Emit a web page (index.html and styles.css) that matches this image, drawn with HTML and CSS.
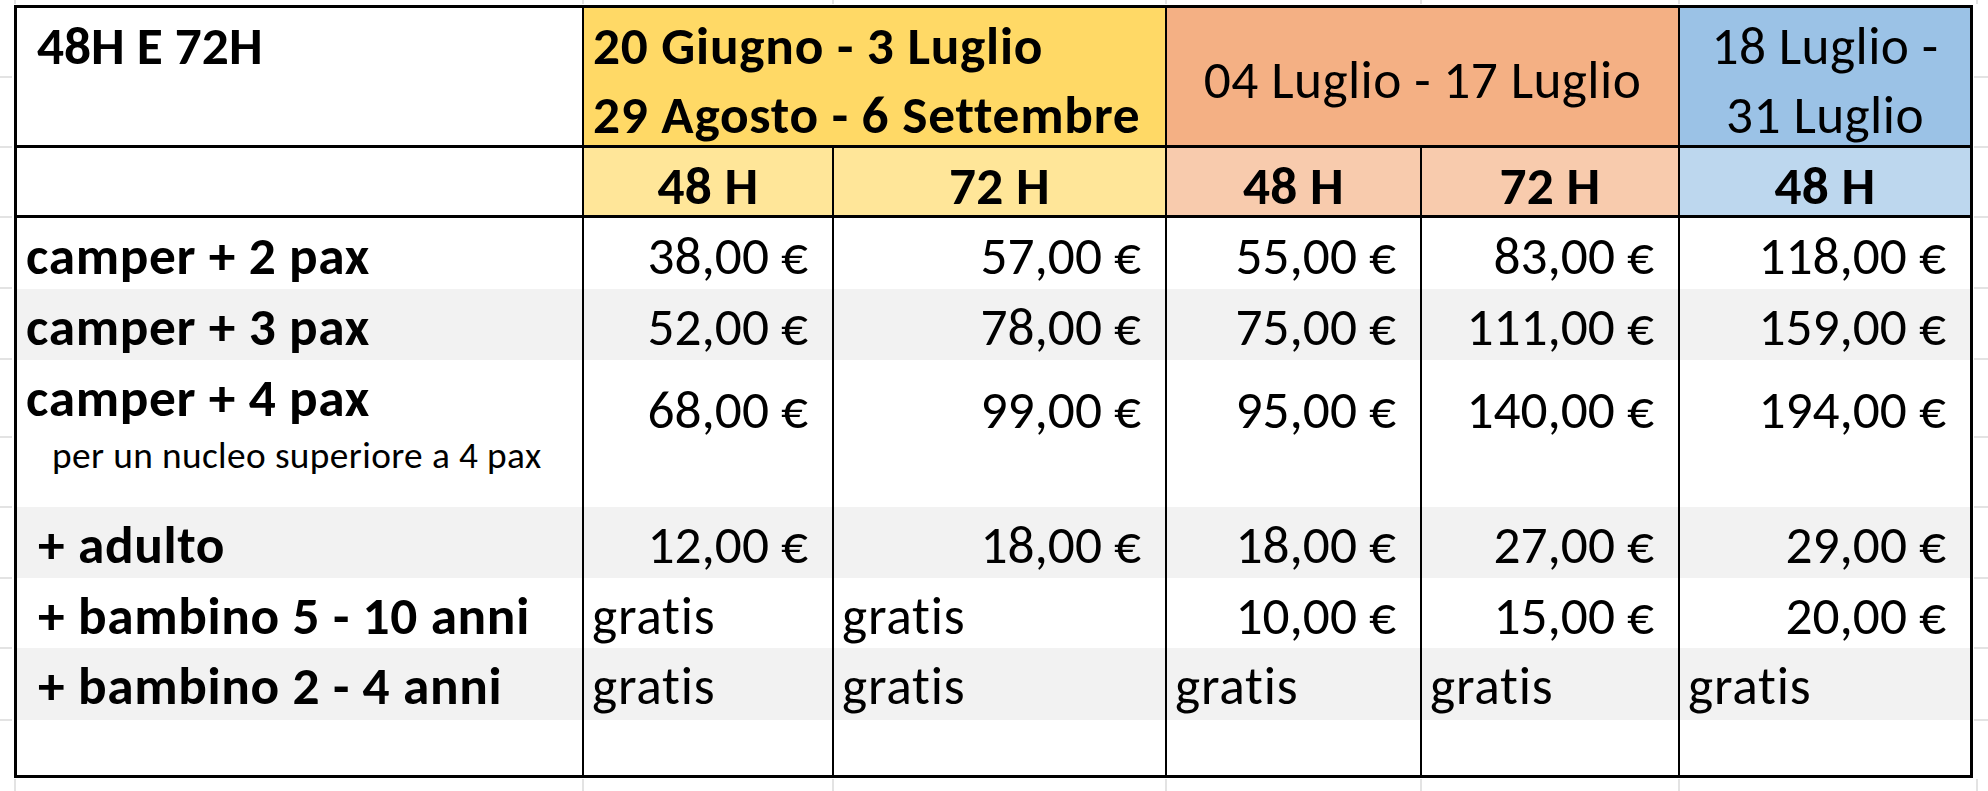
FILE: index.html
```html
<!DOCTYPE html>
<html lang="it">
<head>
<meta charset="utf-8">
<title>Tariffe camper 48H e 72H</title>
<link rel="stylesheet" href="styles.css">
</head>
<body>
<div class="sheet">
  <div class="rates">
    <div class="cell h1 title">48H E 72H</div>
    <div class="cell h1 yellow bold span2 left">20 Giugno - 3 Luglio<br>29 Agosto - 6 Settembre</div>
    <div class="cell h1 orange span2 center mid">04 Luglio - 17 Luglio</div>
    <div class="cell h1 blue center">18 Luglio -<br>31 Luglio</div>

    <div class="cell h2 first"></div>
    <div class="cell h2 yellow-l sub center">48 H</div>
    <div class="cell h2 yellow-l sub center">72 H</div>
    <div class="cell h2 orange-l sub center">48 H</div>
    <div class="cell h2 orange-l sub center">72 H</div>
    <div class="cell h2 blue-l sub center">48 H</div>

    <div class="cell first label">camper + 2 pax</div>
    <div class="cell num">38,00 €</div>
    <div class="cell num">57,00 €</div>
    <div class="cell num">55,00 €</div>
    <div class="cell num">83,00 €</div>
    <div class="cell num">118,00 €</div>

    <div class="cell first label band">camper + 3 pax</div>
    <div class="cell num band">52,00 €</div>
    <div class="cell num band">78,00 €</div>
    <div class="cell num band">75,00 €</div>
    <div class="cell num band">111,00 €</div>
    <div class="cell num band">159,00 €</div>

    <div class="cell first label tall">camper + 4 pax<div class="note">per un nucleo superiore a 4 pax</div></div>
    <div class="cell num low">68,00 €</div>
    <div class="cell num low">99,00 €</div>
    <div class="cell num low">95,00 €</div>
    <div class="cell num low">140,00 €</div>
    <div class="cell num low">194,00 €</div>

    <div class="cell first label indent band">+ adulto</div>
    <div class="cell num band">12,00 €</div>
    <div class="cell num band">18,00 €</div>
    <div class="cell num band">18,00 €</div>
    <div class="cell num band">27,00 €</div>
    <div class="cell num band">29,00 €</div>

    <div class="cell first label indent">+ bambino 5 - 10 anni</div>
    <div class="cell free">gratis</div>
    <div class="cell free">gratis</div>
    <div class="cell num">10,00 €</div>
    <div class="cell num">15,00 €</div>
    <div class="cell num">20,00 €</div>

    <div class="cell first label indent band">+ bambino 2 - 4 anni</div>
    <div class="cell free band">gratis</div>
    <div class="cell free band">gratis</div>
    <div class="cell free band">gratis</div>
    <div class="cell free band">gratis</div>
    <div class="cell free band">gratis</div>

    <div class="cell first"></div>
    <div class="cell"></div>
    <div class="cell"></div>
    <div class="cell"></div>
    <div class="cell"></div>
    <div class="cell"></div>
  </div>
</div>
</body>
</html>
```

FILE: styles.css
```css
* { box-sizing: border-box; }

html, body {
  margin: 0;
}

body {
  font-family: "Carlito", "Lato", "Liberation Sans", sans-serif;
  font-variant-ligatures: none;
  color: #000000;
  min-height: 791px;
  background-color: #ffffff;
  /* faint spreadsheet gridlines visible around the table */
  background-image:
    linear-gradient(to bottom,
      transparent 76px, #e3e3e3 76px, #e3e3e3 78px, transparent 78px,
      transparent 146px, #e3e3e3 146px, #e3e3e3 148px, transparent 148px,
      transparent 216px, #e3e3e3 216px, #e3e3e3 218px, transparent 218px,
      transparent 287px, #e3e3e3 287px, #e3e3e3 289px, transparent 289px,
      transparent 358px, #e3e3e3 358px, #e3e3e3 360px, transparent 360px,
      transparent 436px, #e3e3e3 436px, #e3e3e3 438px, transparent 438px,
      transparent 506px, #e3e3e3 506px, #e3e3e3 508px, transparent 508px,
      transparent 577px, #e3e3e3 577px, #e3e3e3 579px, transparent 579px,
      transparent 647px, #e3e3e3 647px, #e3e3e3 649px, transparent 649px,
      transparent 719px, #e3e3e3 719px, #e3e3e3 721px, transparent 721px),
    linear-gradient(to bottom,
      transparent 76px, #e3e3e3 76px, #e3e3e3 78px, transparent 78px,
      transparent 146px, #e3e3e3 146px, #e3e3e3 148px, transparent 148px,
      transparent 216px, #e3e3e3 216px, #e3e3e3 218px, transparent 218px,
      transparent 287px, #e3e3e3 287px, #e3e3e3 289px, transparent 289px,
      transparent 358px, #e3e3e3 358px, #e3e3e3 360px, transparent 360px,
      transparent 436px, #e3e3e3 436px, #e3e3e3 438px, transparent 438px,
      transparent 506px, #e3e3e3 506px, #e3e3e3 508px, transparent 508px,
      transparent 577px, #e3e3e3 577px, #e3e3e3 579px, transparent 579px,
      transparent 647px, #e3e3e3 647px, #e3e3e3 649px, transparent 649px,
      transparent 719px, #e3e3e3 719px, #e3e3e3 721px, transparent 721px),
    linear-gradient(to right,
      transparent 14px, #e3e3e3 14px, #e3e3e3 16px, transparent 16px,
      transparent 582px, #e3e3e3 582px, #e3e3e3 584px, transparent 584px,
      transparent 832px, #e3e3e3 832px, #e3e3e3 834px, transparent 834px,
      transparent 1165px, #e3e3e3 1165px, #e3e3e3 1167px, transparent 1167px,
      transparent 1420px, #e3e3e3 1420px, #e3e3e3 1422px, transparent 1422px,
      transparent 1678px, #e3e3e3 1678px, #e3e3e3 1680px, transparent 1680px,
      transparent 1976px, #e3e3e3 1976px, #e3e3e3 1978px, transparent 1978px),
    linear-gradient(to right,
      transparent 14px, #e3e3e3 14px, #e3e3e3 16px, transparent 16px,
      transparent 582px, #e3e3e3 582px, #e3e3e3 584px, transparent 584px,
      transparent 832px, #e3e3e3 832px, #e3e3e3 834px, transparent 834px,
      transparent 1165px, #e3e3e3 1165px, #e3e3e3 1167px, transparent 1167px,
      transparent 1420px, #e3e3e3 1420px, #e3e3e3 1422px, transparent 1422px,
      transparent 1678px, #e3e3e3 1678px, #e3e3e3 1680px, transparent 1680px,
      transparent 1976px, #e3e3e3 1976px, #e3e3e3 1978px, transparent 1978px);
  background-size: 12px 791px, 14px 791px, 1988px 4px, 1988px 12px;
  background-position: 0 0, 1974px 0, 0 0, 0 779px;
  background-repeat: no-repeat;
}

.sheet {
  padding: 5px 0 0 14px;
}

.rates {
  display: grid;
  grid-template-columns: 565px 250px 333px 255px 258px 292px;
  grid-template-rows: 140px 70px 71px 71px 147px 71px 70px 72px 55px;
  width: max-content;
  border: 3px solid #000;
  background: #ffffff;
  font-size: 53.33px;
  line-height: 69px;
  white-space: nowrap;
}

.cell {
  border-left: 2px solid #000;
  padding: 3px 0 0 0;
  letter-spacing: 0.4px;
}

.cell.first,
.cell.title,
.cell.label {
  border-left: none;
}

.h1,
.h2 {
  border-bottom: 3px solid #000;
  padding-top: 3px;
}

.bold {
  font-weight: 700;
  letter-spacing: 0.75px;
}

.span2 { grid-column: span 2; }

.title {
  font-weight: 700;
  letter-spacing: 0;
  padding-left: 20px;
}

.left { padding-left: 9px; }

.center { text-align: center; }

.h1.mid { padding-top: 37px; }

.sub {
  font-weight: 700;
  letter-spacing: 0.3px;
}

.yellow { background: #ffd966; }
.yellow-l { background: #ffe699; }
.orange { background: #f4b084; }
.orange-l { background: #f8cbad; }
.blue { background: #9bc2e6; }
.blue-l { background: #bdd7ee; }

.band { background: #f2f2f2; }

.label {
  font-weight: 700;
  letter-spacing: 0.65px;
  padding-left: 9px;
}

.label.indent { padding-left: 21px; }

.note {
  font-weight: 400;
  font-size: 37.33px;
  line-height: 40px;
  letter-spacing: 0.38px;
  padding-top: 3px;
  padding-left: 26px;
}

.num {
  text-align: right;
  letter-spacing: 0;
  padding-right: 24px;
}

.num.low { padding-top: 15px; }

.free {
  text-align: left;
  letter-spacing: 0.8px;
  padding-left: 8px;
}
```
